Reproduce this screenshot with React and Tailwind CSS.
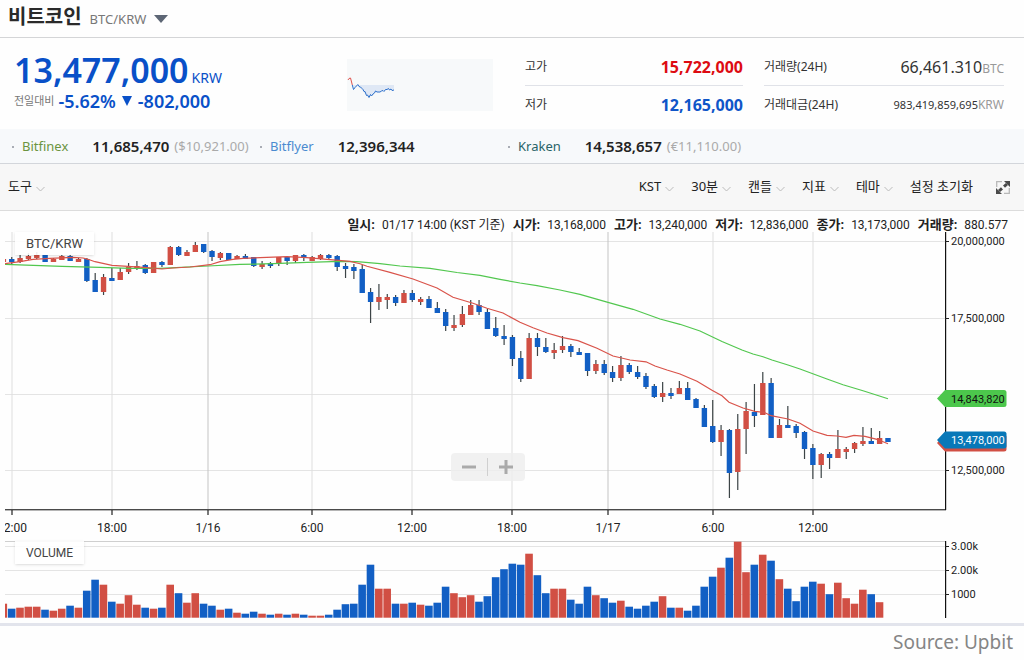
import React from "react";

const NOTO = "font-['Noto_Sans','Noto_Sans_CJK_KR',sans-serif]";
const ROBOTO = "font-['Roboto','Noto_Sans_CJK_KR',sans-serif]";

const BLUE = "#125fc4";
const RED = "#d14f44";

// [colour, body top, body bottom, wick top, wick bottom, volume height]
const candles = [
  ["r", 259, 262, 259, 262, 14],
  ["b", 259, 262, 257, 264, 9],
  ["r", 258, 262, 255, 263, 10],
  ["r", 256, 259, 253, 260, 11],
  ["r", 255, 258, 252, 259, 11],
  ["b", 255, 262, 255, 262, 8],
  ["r", 259, 262, 258, 262, 7],
  ["r", 256, 260, 255, 260, 9],
  ["b", 256, 261, 255, 261, 12],
  ["r", 259, 262, 258, 262, 10],
  ["b", 259, 281, 258, 282, 27],
  ["b", 280, 292, 273, 292, 38],
  ["r", 277, 292, 274, 295, 33],
  ["b", 278, 281, 268, 281, 16],
  ["r", 272, 280, 268, 280, 14],
  ["r", 267, 272, 263, 274, 22.5],
  ["r", 266, 269, 261, 270, 13],
  ["b", 265, 273, 264, 274, 10],
  ["r", 262, 273, 262, 273, 9],
  ["b", 262, 265, 261, 267, 10],
  ["r", 247, 265, 246, 265, 33],
  ["b", 247, 255, 246, 256, 24.5],
  ["r", 252, 256, 250, 256, 15],
  ["r", 245, 252, 242, 252, 24.5],
  ["b", 244, 252, 244, 253, 14],
  ["b", 251, 257, 250, 261, 12],
  ["r", 253, 258, 252, 260, 8],
  ["b", 253, 260, 253, 260, 9],
  ["r", 256, 259, 255, 259, 5],
  ["b", 256, 259, 254, 259, 4],
  ["b", 257, 266, 257, 267, 6],
  ["r", 264, 267, 261, 269, 4],
  ["b", 263, 266, 262, 268, 3],
  ["r", 257, 264, 257, 266, 4],
  ["b", 257, 261, 257, 265, 3],
  ["r", 255, 261, 255, 263, 4],
  ["b", 255, 257, 254, 261, 3],
  ["r", 257, 261, 256, 261, 2],
  ["r", 255, 259, 254, 260, 2],
  ["b", 255, 258, 254, 259, 3],
  ["b", 256, 267, 255, 271, 8],
  ["b", 266, 269, 263, 278, 13.5],
  ["b", 267, 271, 264, 279, 14],
  ["b", 269, 293, 265, 293, 33],
  ["b", 292, 302, 288, 323, 53],
  ["r", 297, 302, 284, 310, 29],
  ["r", 297, 300, 294, 309, 29],
  ["b", 297, 303, 295, 306, 14],
  ["r", 293, 303, 290, 303, 14],
  ["b", 293, 300, 290, 302, 15],
  ["r", 299, 302, 297, 305, 13],
  ["b", 299, 308, 296, 308, 12],
  ["b", 308, 313, 302, 313, 15],
  ["b", 312, 326, 309, 331, 31],
  ["r", 325, 328, 315, 331, 24.5],
  ["r", 314, 325, 306, 327, 20.5],
  ["r", 305, 315, 300, 315, 22.5],
  ["b", 305, 312, 300, 315, 16],
  ["b", 312, 329, 309, 329, 21.5],
  ["b", 328, 336, 317, 337, 40.5],
  ["b", 336, 339, 325, 345, 48.5],
  ["b", 337, 359, 335, 366, 54],
  ["b", 358, 379, 351, 382, 53],
  ["r", 338, 379, 333, 379, 64],
  ["b", 338, 347, 333, 356, 42.5],
  ["b", 347, 352, 338, 353, 24.5],
  ["r", 350, 353, 343, 359, 29],
  ["r", 346, 350, 336, 353, 29],
  ["b", 346, 352, 344, 357, 18],
  ["b", 352, 355, 348, 355, 14],
  ["b", 353, 371, 353, 376, 31],
  ["r", 364, 371, 360, 374, 22.5],
  ["b", 364, 373, 360, 375, 19.5],
  ["b", 372, 378, 366, 382, 15],
  ["r", 365, 378, 356, 381, 17],
  ["b", 365, 372, 363, 374, 11],
  ["b", 372, 377, 366, 379, 9],
  ["b", 376, 387, 373, 389, 12],
  ["b", 386, 397, 384, 398, 16],
  ["r", 393, 397, 382, 402, 21.5],
  ["b", 393, 396, 388, 399, 10],
  ["r", 388, 394, 381, 394, 10],
  ["b", 388, 400, 382, 400, 7],
  ["b", 399, 408, 398, 408, 12],
  ["b", 408, 427, 405, 427, 31],
  ["b", 426, 442, 400, 443, 41],
  ["r", 430, 442, 425, 456, 50],
  ["b", 430, 473, 429, 498, 60],
  ["r", 429, 472, 414, 490, 76],
  ["r", 411, 429, 402, 454, 45.5],
  ["b", 412, 416, 384, 427, 53],
  ["r", 383, 415, 372, 415, 63],
  ["b", 383, 438, 378, 438, 57],
  ["r", 425, 438, 419, 438, 38.5],
  ["b", 425, 428, 406, 428, 29],
  ["b", 426, 433, 424, 438, 16.5],
  ["b", 432, 449, 431, 459, 31],
  ["b", 448, 465, 444, 479, 36],
  ["r", 454, 465, 453, 478, 34],
  ["b", 454, 458, 452, 469, 23.5],
  ["r", 449, 458, 430, 458, 35],
  ["r", 449, 452, 447, 459, 19.5],
  ["r", 443, 449, 442, 453, 14],
  ["r", 441, 444, 427, 446, 28],
  ["b", 441, 444, 428, 444, 23.5],
  ["r", 438, 444, 431, 444, 15.5],
  ["b", 438, 442, 438, 442, 0],
];

const longAverage =
  "5,264.3 62,266.3 100,267.3 130,268.3 160,268.3 208,266 240,264.4 273,263.7 307,262.3 340,261.3 357,261.7 380,263.7 400,266 430,268.4 457,272.5 480,275.3 500,279.3 520,283 537,285.7 560,290 580,294.3 608,302.3 633,309.3 660,319 680,324.3 700,331 722,341.5 742,350 753,354 763,356.7 772,360 788,365 800,369 827,379 843,384.7 863,390.7 888,398.7";
const shortAverage =
  "5,263.7 20,261.7 33,259.3 50,258.3 73,257.3 83,258 88,259.3 95,261.7 112,265.3 128,266.3 147,267.7 162,269 173,268 190,267 210,264.7 220,261.7 233,259.3 243,258.3 260,257.7 287,256.7 307,257.7 327,259.3 350,261.3 360,263.7 367,266.3 390,272.3 413,279 437,288 453,297.3 473,303.3 487,308.3 503,313 520,322.3 533,327.7 547,333 563,337.7 578,340.7 597,348.3 613,356 630,360 646,361.8 655,366 667,370 680,374 697,381.3 712,390.3 722,395.7 729,402.3 743,408 755,411.3 764,412.3 771,415.7 788,419 800,423.3 813,431 827,435.3 837,436 846,437.3 854,435.3 865,436.3 877,439.3 888,443.7";

const times = [
  [12, "12:00", false],
  [112, "18:00", false],
  [208, "1/16", true],
  [312, "6:00", false],
  [412, "12:00", false],
  [512, "18:00", false],
  [608, "1/17", true],
  [713, "6:00", false],
  [813, "12:00", false],
];

const prices = [
  [241, "20,000,000"],
  [318, "17,500,000"],
  [394, "15,000,000"],
  [470, "12,500,000"],
];

const volumes = [
  [546, "3.00k"],
  [570, "2.00k"],
  [594, "1000"],
];

const candleX = (i) => 3.4 + i * 8.345;

function PriceTag({ y, color, textColor, label }) {
  return (
    <g>
      <path
        d={`M937 ${y} L945 ${y - 8.5} H1004 Q1006.5 ${y - 8.5} 1006.5 ${y - 6} V${y + 6} Q1006.5 ${y + 8.5} 1004 ${y + 8.5} H945 Z`}
        fill={color}
      />
      {label && (
        <text x="951" y={y + 4} fill={textColor}>
          {label}
        </text>
      )}
    </g>
  );
}

function CandleChart() {
  return (
    <svg viewBox="0 232 1024 391" className={`block h-auto w-full text-[11px] ${ROBOTO}`} role="img" aria-label="BTC/KRW">
      <defs>
        <clipPath id="plot">
          <rect x="5" y="232" width="940" height="391" />
        </clipPath>
      </defs>

      <g clipPath="url(#plot)">
        {prices.map(([y]) => (
          <rect key={y} x="5" y={y} width="940" height="1" fill="#e4e4e4" />
        ))}
        {volumes.map(([y]) => (
          <rect key={y} x="5" y={y} width="940" height="1" fill="#e4e4e4" />
        ))}
        {times.map(([x, , day]) => (
          <rect key={x} x={x - 0.5} y="232" width="1" height="278" fill={day ? "#c4c4c4" : "#dedede"} />
        ))}
        <rect x="5" y="541" width="940" height="1" fill="#cfcfcf" />

        {candles.map(([c, top, bottom, high, low, volume], i) => {
          const x = candleX(i);
          const fill = c === "b" ? BLUE : RED;
          return (
            <g key={i}>
              <rect x={x - 0.6} y={high} width="1.2" height={low - high} fill="#3c4446" />
              <rect x={x - 2.7} y={top} width="5.4" height={bottom - top} fill={fill} />
              <rect x={x - 3.9} y={617.7 - volume} width="7.6" height={volume} fill={fill} />
            </g>
          );
        })}
        <polyline points={longAverage} fill="none" stroke="#52c74f" strokeWidth="1.2" />
        <polyline points={shortAverage} fill="none" stroke="#d9534a" strokeWidth="1.2" />

        <g fill="#222" textAnchor="middle" className="text-[12px]">
          {times.map(([x, label]) => (
            <text key={x} x={x} y="532">
              {label}
            </text>
          ))}
        </g>
      </g>

      <rect x="5" y="509" width="941" height="1.4" fill="#4a4a4a" />
      {times.map(([x]) => (
        <rect key={x} x={x - 0.6} y="510" width="1.2" height="5" fill="#222" />
      ))}
      <rect x="945" y="232" width="1.2" height="278" fill="#111" />
      <rect x="945" y="541" width="1.2" height="77" fill="#111" />

      <g fill="#222">
        {prices.concat(volumes).map(([y, label]) => (
          <g key={label}>
            <rect x="945" y={y} width="4" height="1" fill="#222" />
            <text x="951" y={y + 4}>
              {label}
            </text>
          </g>
        ))}
      </g>

      <PriceTag y={398.5} color="#4cc74c" textColor="#111" label="14,843,820" />
      <PriceTag y={443} color="#d14f44" />
      <PriceTag y={440} color="#0878b8" textColor="#fff" label="13,478,000" />
    </svg>
  );
}

function Sparkline() {
  return (
    <svg viewBox="0 0 146 52" className="h-[52px] w-[146px] bg-[#f7f9fa]" aria-hidden="true">
      <path
        d="M6 26 L7 30.5 L9 28 L10.5 26 H47 V31 L44 30.500 L41 30.500 L36 32 L31 33 L28 33 L25 36 L22 38.500 L19 36 L16 32 L13 29 L11 26 Z"
        fill="#dfe8f5"
      />
      <path d="M1 21 L2 19.500 L3.500 19 L4.300 22 L5.300 26" fill="none" stroke="#e0524c" strokeWidth="1" />
      <path
        d="M5.300 26 L6.500 30.500 L8 28.500 L9.500 27 L10.800 25.500 L12 27.500 L13.500 28 L15 29.500 L16 30.500 L17 32.500 L18 32.500 L19.500 36.500 L20.500 36 L22 38.500 L23.500 35.500 L24.500 37 L26 35 L27.500 34 L28.500 32 L30 33 L33 33 L34.500 32 L36 31.500 L37 32.500 L38.500 30.500 L40 30.500 L41.500 29.500 L42.500 31 L44 30 L45 31.500 L47 31"
        fill="none"
        stroke="#2b6fcb"
        strokeWidth="1"
      />
    </svg>
  );
}

function StatRow({ label, children }) {
  return (
    <div className="flex h-[38px] items-center justify-between">
      <dt className="text-[12px] text-[#333]">{label}</dt>
      <dd className="flex items-baseline">{children}</dd>
    </div>
  );
}

function Exchange({ name, color, value, foreign }) {
  return (
    <li className="flex items-center whitespace-nowrap">
      <span className="mr-2 size-[2px] bg-[#a9adb5]" />
      <span className={`mr-6 text-[13px] ${color}`}>{name}</span>
      <span className="text-[15px] font-semibold text-[#222]">{value}</span>
      {foreign && <span className="ml-[5px] text-[13px] text-[#aaa]">{foreign}</span>}
    </li>
  );
}

function MenuButton({ children }) {
  return (
    <button type="button" aria-haspopup="menu" className="flex items-center gap-1">
      {children}
      <svg viewBox="0 0 9 6" className="mt-1 h-[6px] w-[9px]" fill="none" stroke="#bbb" aria-hidden="true">
        <path d="M0.500 1 L4.500 5 L8.500 1" />
      </svg>
    </button>
  );
}

const readout = [
  ["일시:", "01/17 14:00 (KST 기준)"],
  ["시가:", "13,168,000"],
  ["고가:", "13,240,000"],
  ["저가:", "12,836,000"],
  ["종가:", "13,173,000"],
  ["거래량:", "880.577"],
];

export default function App() {
  return (
    <main className={`min-h-screen bg-[#fefefe] text-[#222] ${NOTO}`}>
      <header className="flex h-[38px] items-center border-b border-[#d4d5d7] px-2">
        <button type="button" aria-haspopup="listbox" className="flex items-baseline gap-2 pb-1">
          <span className="text-[20px] leading-7 font-bold text-[#2a2a2a]">비트코인</span>
          <span className="text-[13px] text-[#777]">BTC/KRW</span>
          <svg viewBox="0 0 14 8" className="mt-1 h-2 w-[14px] self-center" fill="#5d6675" aria-hidden="true">
            <path d="M0 0 H14 L7 8 Z" />
          </svg>
        </button>
      </header>

      <section className="grid h-[91px] grid-cols-[333fr_178fr_239fr_240fr] pr-5 pl-[14px] whitespace-nowrap">
        <div className="pt-3 text-[#0950c8]">
          <p className="flex items-baseline gap-[3px]">
            <span className="text-[34px] leading-10 font-semibold">13,477,000</span>
            <span className="text-[14px] leading-4">KRW</span>
          </p>
          <p className="flex items-center text-[18px] leading-[22px] font-semibold">
            <span className="mr-1 text-[11px] font-normal text-[#777]">전일대비</span>
            <span>-5.62%</span>
            <svg viewBox="0 0 10 10" className="mx-[6px] size-[10px]" fill="currentColor" aria-hidden="true">
              <path d="M0 0 H10 L5 10 Z" />
            </svg>
            <span>-802,000</span>
          </p>
        </div>
        <div className="pt-[21px]">
          <Sparkline />
        </div>
        <dl className="mr-[21px] divide-y divide-[#e0e2e8] pt-[10px]">
          <StatRow label="고가">
            <span className="text-[16px] font-bold text-[#dd0b12]">15,722,000</span>
          </StatRow>
          <StatRow label="저가">
            <span className="text-[16px] font-bold text-[#0f55c8]">12,165,000</span>
          </StatRow>
        </dl>
        <dl className="divide-y divide-[#e0e2e8] pt-[10px]">
          <StatRow label="거래량(24H)">
            <span className="text-[16px] text-[#333]">66,461.310</span>
            <span className="text-[12px] text-[#999]">BTC</span>
          </StatRow>
          <StatRow label="거래대금(24H)">
            <span className="text-[11px] text-[#333]">983,419,859,695</span>
            <span className="text-[12px] text-[#999]">KRW</span>
          </StatRow>
        </dl>
      </section>

      <ul className="grid h-[35px] grid-cols-4 border-b border-[#d3d6db] bg-[#f7f9fb] pt-px pr-5 pl-3">
        <Exchange name="Bitfinex" color="text-[#6b9440]" value="11,685,470" foreign="($10,921.00)" />
        <Exchange name="Bitflyer" color="text-[#4a8bd0]" value="12,396,344" />
        <Exchange name="Kraken" color="text-[#286468]" value="14,538,657" foreign="(€11,110.00)" />
      </ul>

      <nav className="flex h-[47px] items-center justify-between border-b border-[#dcdcdc] bg-[#f7f7f7] pr-[14px] pl-2 text-[13px] whitespace-nowrap">
        <MenuButton>도구</MenuButton>
        <div className="flex items-center gap-[17px]">
          <MenuButton>KST</MenuButton>
          <MenuButton>30분</MenuButton>
          <MenuButton>캔들</MenuButton>
          <MenuButton>지표</MenuButton>
          <MenuButton>테마</MenuButton>
          <button type="button">설정 초기화</button>
          <button type="button" aria-label="전체 화면" className="ml-[6px]">
            <svg viewBox="0 0 14 13" className="h-[13px] w-[14px]" fill="none" aria-hidden="true">
              <path d="M6 0.700 H0.700 V6 M13.300 7 V12.300 H8" stroke="#b8b8b8" strokeWidth="1.300" />
              <path d="M3 10 L6 7.300 M8 5.700 L11 3" stroke="#4a4a4a" strokeWidth="3" />
              <path d="M8 0 H14 V6 Z M6 13 H0 V7 Z" fill="#4a4a4a" />
            </svg>
          </button>
        </div>
      </nav>

      <dl className={`flex h-[21px] items-end justify-end gap-2 pr-4 text-[12px] leading-[14px] whitespace-nowrap ${ROBOTO}`}>
        {readout.map(([label, value]) => (
          <div key={label} className="flex items-baseline gap-[7px]">
            <dt className="text-[13px] font-bold">{label}</dt>
            <dd>{value}</dd>
          </div>
        ))}
      </dl>

      <section className={`relative border-b-[3px] border-[#e2e4ec] ${ROBOTO}`}>
        <CandleChart />
        <h2 className="absolute top-0 left-[15px] h-[23px] bg-white/90 px-[11px] text-[13px] leading-6 text-[#444] shadow-sm">
          BTC/KRW
        </h2>
        <h2 className="absolute top-[79%] left-[15px] h-[23px] bg-white/90 px-[11px] text-[12px] leading-6 text-[#444] shadow-sm">
          VOLUME
        </h2>
        <div className="absolute top-[221px] left-[44%] flex h-7 w-[74px] items-center divide-x divide-[#d0d0d0] rounded bg-[#ededed]/80 text-[#aaa]">
          <button type="button" aria-label="축소" className="flex h-[18px] flex-1 items-center justify-center">
            <svg viewBox="0 0 14 14" className="size-[14px]" fill="currentColor" aria-hidden="true">
              <path d="M0 5.500 H14 V8.500 H0 Z" />
            </svg>
          </button>
          <button type="button" aria-label="확대" className="flex h-[18px] flex-1 items-center justify-center">
            <svg viewBox="0 0 14 14" className="size-[14px]" fill="currentColor" aria-hidden="true">
              <path d="M0 5.500 H5.500 V0 H8.500 V5.500 H14 V8.500 H8.500 V14 H5.500 V8.500 H0 Z" />
            </svg>
          </button>
        </div>
      </section>

      <footer className="px-[11px] text-right text-[19px] leading-8 text-[#858585]">Source: Upbit</footer>
    </main>
  );
}
